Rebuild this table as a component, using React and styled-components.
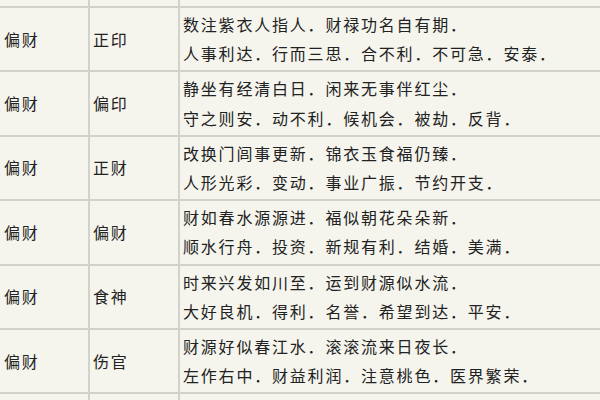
import React from "react";
import styled, { createGlobalStyle } from "styled-components";

const GlobalStyle = createGlobalStyle`
  html, body {
    margin: 0;
    padding: 0;
    background: #f5f5ee;
    overflow: hidden;
  }
  body {
    font-family: "Noto Sans CJK SC", "Noto Sans", sans-serif;
    color: #222;
  }
`;

const Table = styled.table`
  width: 660px;
  table-layout: fixed;
  border-collapse: separate;
  border-spacing: 0;
  background: #f5f5ee;
`;

const Cell = styled.td`
  border: 1px solid #d2d2cc;
  border-left: ${(p) => (p.$first ? "none" : "1px solid #d2d2cc")};
  padding: 2px 3px 2px ${(p) => (p.$first ? "4px" : "3px")};
  font-size: 16px;
  letter-spacing: 1.8px;
  line-height: 29.2px;
  vertical-align: middle;
  white-space: nowrap;
  overflow: hidden;
`;

const StubCell = styled.td`
  border: 1px solid #d2d2cc;
  border-top: none;
  border-left: ${(p) => (p.$first ? "none" : "1px solid #d2d2cc")};
  height: 6px;
  padding: 0;
`;

const Line = styled.div`
  white-space: nowrap;
`;

const rows = [
  ["偏财", "正印", "数注紫衣人指人．财禄功名自有期．", "人事利达．行而三思．合不利．不可急．安泰．"],
  ["偏财", "偏印", "静坐有经清白日．闲来无事伴红尘．", "守之则安．动不利．候机会．被劫．反背．"],
  ["偏财", "正财", "改换门闾事更新．锦衣玉食福仍臻．", "人形光彩．变动．事业广振．节约开支．"],
  ["偏财", "偏财", "财如春水源源进．福似朝花朵朵新．", "顺水行舟．投资．新规有利．结婚．美满．"],
  ["偏财", "食神", "时来兴发如川至．运到财源似水流．", "大好良机．得利．名誉．希望到达．平安．"],
  ["偏财", "伤官", "财源好似春江水．滚滚流来日夜长．", "左作右中．财益利润．注意桃色．医界繁荣．"],
];

export default function App() {
  return (
    <>
      <GlobalStyle />
      <Table>
        <colgroup>
          <col style={{ width: 89 }} />
          <col style={{ width: 90 }} />
          <col />
        </colgroup>
        <tbody>
          <tr>
            <StubCell $first />
            <StubCell />
            <StubCell />
          </tr>
          {rows.map((r, i) => (
            <tr key={i}>
              <Cell $first>{r[0]}</Cell>
              <Cell>{r[1]}</Cell>
              <Cell>
                <Line>{r[2]}</Line>
                <Line>{r[3]}</Line>
              </Cell>
            </tr>
          ))}
          <tr>
            <Cell $first>&nbsp;</Cell>
            <Cell>&nbsp;</Cell>
            <Cell>&nbsp;</Cell>
          </tr>
        </tbody>
      </Table>
    </>
  );
}
